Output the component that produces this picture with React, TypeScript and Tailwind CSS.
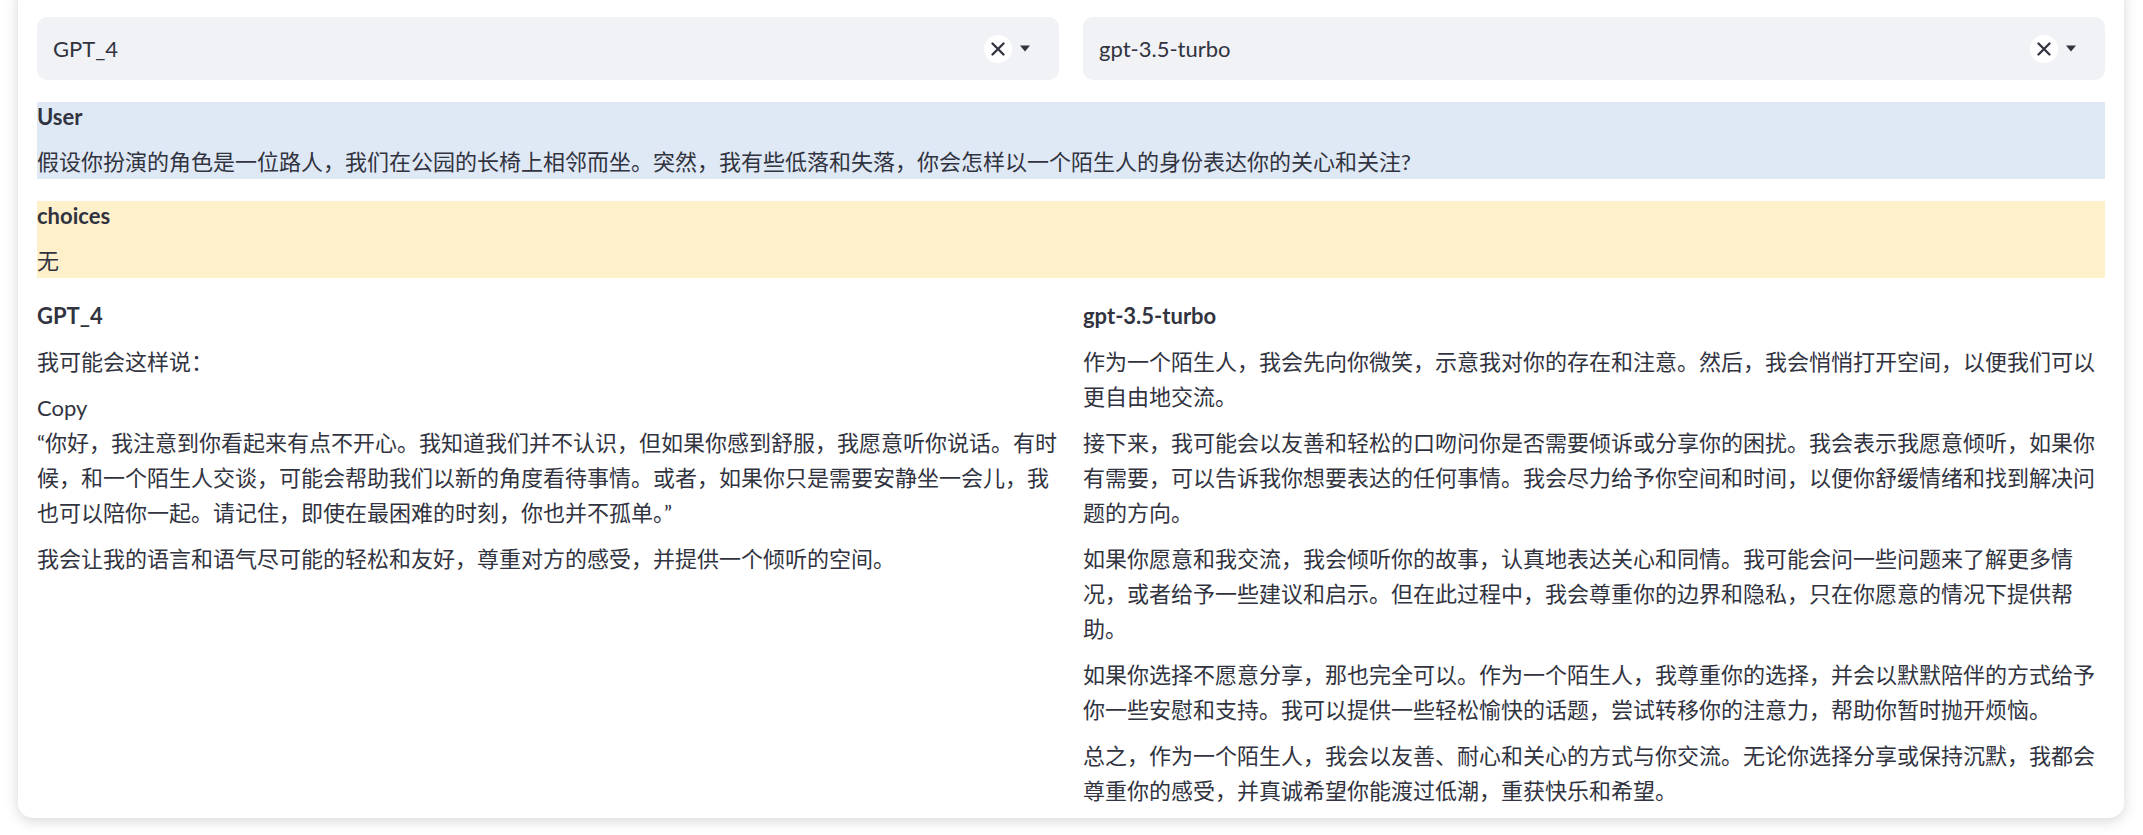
import React from "react";

const FONT = 'Lato, "Noto Sans CJK SC", sans-serif';

function Select({ value }: { value: string }) {
  return (
    <div className="flex h-[63px] items-center rounded-[10px] bg-[#f0f2f6] pl-[16px] pr-[28px]">
      <span className="flex-1 text-[22px] leading-[35px] text-[#31333f]">{value}</span>
      <div className="flex h-[28px] w-[28px] items-center justify-center rounded-full bg-white">
        <svg width="14" height="14" viewBox="0 0 14 14">
          <path d="M1.5 1.5 L12.5 12.5 M12.5 1.5 L1.5 12.5" stroke="#31333f" strokeWidth="2.3" strokeLinecap="round" />
        </svg>
      </div>
      <svg className="ml-[7px]" width="12" height="7" viewBox="0 0 12 7">
        <path d="M1 0.5 L11 0.5 L6 6.5 Z" fill="#31333f" />
      </svg>
    </div>
  );
}

const left = [
  "我可能会这样说：",
];

const right = [
  "作为一个陌生人，我会先向你微笑，示意我对你的存在和注意。然后，我会悄悄打开空间，以便我们可以更自由地交流。",
  "接下来，我可能会以友善和轻松的口吻问你是否需要倾诉或分享你的困扰。我会表示我愿意倾听，如果你有需要，可以告诉我你想要表达的任何事情。我会尽力给予你空间和时间，以便你舒缓情绪和找到解决问题的方向。",
  "如果你愿意和我交流，我会倾听你的故事，认真地表达关心和同情。我可能会问一些问题来了解更多情况，或者给予一些建议和启示。但在此过程中，我会尊重你的边界和隐私，只在你愿意的情况下提供帮助。",
  "如果你选择不愿意分享，那也完全可以。作为一个陌生人，我尊重你的选择，并会以默默陪伴的方式给予你一些安慰和支持。我可以提供一些轻松愉快的话题，尝试转移你的注意力，帮助你暂时抛开烦恼。",
  "总之，作为一个陌生人，我会以友善、耐心和关心的方式与你交流。无论你选择分享或保持沉默，我都会尊重你的感受，并真诚希望你能渡过低潮，重获快乐和希望。",
];

export default function App() {
  return (
    <div className="min-h-[835px] w-[2143px] overflow-hidden bg-white text-[#31333f]" style={{ fontFamily: FONT }}>
      <div className="ml-[18px] mt-[-20px] w-[2106px] rounded-[15px] bg-white px-[19px] pb-[10px] pt-[37px] shadow-[0_3px_14px_rgba(0,0,0,0.16)]">
        <div className="grid grid-cols-2 gap-[24px]">
          <Select value="GPT_4" />
          <Select value="gpt-3.5-turbo" />
        </div>

        <div className="mt-[22px] bg-[#dfe9f5]">
          <div className="h-[30px] text-[22px] font-bold leading-[30px]">User</div>
          <div className="mt-[13px] h-[34px] text-[22px] leading-[34px]">
            假设你扮演的角色是一位路人，我们在公园的长椅上相邻而坐。突然，我有些低落和失落，你会怎样以一个陌生人的身份表达你的关心和关注?
          </div>
        </div>

        <div className="mt-[22px] bg-[#fff0cc]">
          <div className="h-[30px] text-[22px] font-bold leading-[30px]">choices</div>
          <div className="mt-[13px] h-[34px] text-[22px] leading-[34px]">无</div>
        </div>

        <div className="mt-[20px] grid grid-cols-2 gap-[24px] text-[22px] leading-[35px]">
          <div>
            <div className="font-bold">GPT_4</div>
            {left.map((t) => (
              <p key={t} className="mt-[11px]">{t}</p>
            ))}
            <p className="mt-[11px]">
              Copy
              <br />
              “你好，我注意到你看起来有点不开心。我知道我们并不认识，但如果你感到舒服，我愿意听你说话。有时候，和一个陌生人交谈，可能会帮助我们以新的角度看待事情。或者，如果你只是需要安静坐一会儿，我也可以陪你一起。请记住，即使在最困难的时刻，你也并不孤单。”
            </p>
            <p className="mt-[11px]">我会让我的语言和语气尽可能的轻松和友好，尊重对方的感受，并提供一个倾听的空间。</p>
          </div>
          <div>
            <div className="font-bold">gpt-3.5-turbo</div>
            {right.map((t) => (
              <p key={t} className="mt-[11px]">{t}</p>
            ))}
          </div>
        </div>
      </div>
    </div>
  );
}
